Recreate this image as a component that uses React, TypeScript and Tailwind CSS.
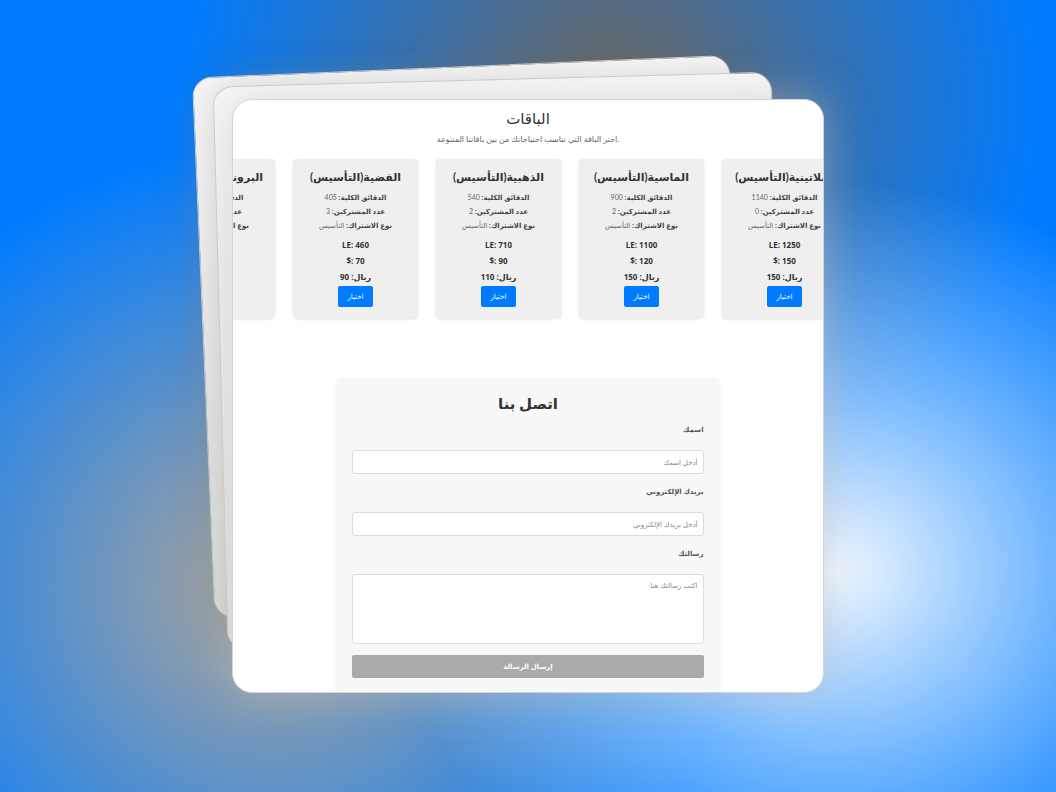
const plans = [
  { name: "البرونزية", minutes: 270, members: 3, le: 320, usd: 50, sar: 60 },
  { name: "الفضية", minutes: 405, members: 3, le: 460, usd: 70, sar: 90 },
  { name: "الذهبية", minutes: 540, members: 2, le: 710, usd: 90, sar: 110 },
  { name: "الماسية", minutes: 900, members: 2, le: 1100, usd: 120, sar: 150 },
  { name: "البلاتينية", minutes: 1140, members: 0, le: 1250, usd: 150, sar: 150 },
];

function PlanCard({ plan }: { plan: (typeof plans)[number] }) {
  return (
    <article
      dir="rtl"
      className="flex h-[159px] w-[125px] shrink-0 flex-col items-center rounded bg-[#efefef] pt-2 text-center whitespace-nowrap shadow-[0_1px_3px_rgba(0,0,0,0.12)]"
    >
      <h3 className="text-[11px] leading-[20px] font-bold text-[#333]">{plan.name}(التأسيس)</h3>
      <div className="mt-[3px] text-[7px] leading-[14px] text-[#666]">
        <p><strong className="text-[#444]">الدقائق الكلية:</strong> {plan.minutes}</p>
        <p><strong className="text-[#444]">عدد المشتركين:</strong> {plan.members}</p>
        <p><strong className="text-[#444]">نوع الاشتراك:</strong> التأسيس</p>
      </div>
      <div className="mt-[5px] font-['Noto_Sans','Lato','DejaVu_Sans',sans-serif] text-[8px] leading-[16px] font-bold text-[#333]">
        <p dir="ltr">LE: {plan.le}</p>
        <p dir="ltr">$: {plan.usd}</p>
        <p>ريال: {plan.sar}</p>
      </div>
      <button type="button" className="mt-px h-[21px] w-[35px] rounded-xs bg-[#007bff] text-[7px] text-white">
        اختيار
      </button>
    </article>
  );
}

const label = "block text-[7px] leading-[10px] font-bold text-[#555]";
const field =
  "mt-4 block w-full rounded-[3px] border border-[#ddd] bg-white px-[5px] text-[7px] text-[#555] outline-none placeholder:text-[#888]";

export default function App() {
  return (
    <div className="grid min-h-screen place-items-center overflow-hidden bg-[#007bff] bg-[radial-gradient(ellipse_440px_390px_at_79%_72%,rgba(240,247,255,1),rgba(225,240,255,0.5)_50%,transparent),radial-gradient(ellipse_460px_440px_at_26%_74%,rgba(176,166,152,1),rgba(176,166,152,0.5)_50%,transparent),radial-gradient(ellipse_430px_420px_at_58%_12%,rgba(108,102,95,1),rgba(108,102,95,0.5)_50%,transparent)] font-['Lato','DejaVu_Sans',sans-serif]">
      <div className="relative h-[75vh] w-[56vw]">
        <div className="absolute -top-[33px] -left-[29px] h-[91%] w-[91%] rotate-[-2.4deg] rounded-[20px] border border-[#ccc] bg-linear-to-b from-[#f5f5f5] to-[#dadada] shadow-[0_10px_40px_rgba(120,115,110,0.3)]" />
        <div className="absolute -top-5 -left-3 h-[95%] w-[94.6%] rotate-[-1.5deg] rounded-[20px] border border-[#ccc] bg-linear-to-b from-[#f7f8f8] to-[#e0e0e0] shadow-[0_0_24px_rgba(100,100,100,0.14)]" />
        <main className="relative h-full overflow-hidden rounded-[20px] border border-[#d4d4d4] bg-white shadow-[0_0_44px_rgba(195,193,190,0.55)]">
          <section className="text-center">
            <h1 className="mt-[7px] text-[15px] leading-[22px] text-[#333]">الباقات</h1>
            <p className="mt-1 text-[8px] leading-[12px] text-[#666]">اختر الباقة التي تناسب احتياجاتك من بين باقاتنا المتنوعة.</p>
            <div className="mt-[14px] flex justify-center gap-[18px] pr-[59px]">
              {plans.map((plan) => (
                <PlanCard key={plan.name} plan={plan} />
              ))}
            </div>
          </section>
          <form dir="rtl" className="mx-auto mt-[60px] w-[65%] rounded-md bg-[#f8f8f8] px-4 pt-[14px] pb-5 shadow-[0_0_3px_rgba(0,0,0,0.06)]">
            <h2 className="text-center text-[15px] leading-[22px] font-bold text-[#333]">اتصل بنا</h2>
            <label htmlFor="name" className={label + " mt-[10px]"}>اسمك</label>
            <input id="name" type="text" placeholder="أدخل اسمك" className={field + " h-6"} />
            <label htmlFor="email" className={label + " mt-3"}>بريدك الإلكتروني</label>
            <input id="email" type="email" placeholder="أدخل بريدك الإلكتروني" className={field + " h-6"} />
            <label htmlFor="message" className={label + " mt-3"}>رسالتك</label>
            <textarea id="message" placeholder="اكتب رسالتك هنا" className={field + " h-[70px] resize-none py-[5px]"} />
            <button type="submit" className="mt-[11px] block h-[23px] w-full rounded-xs bg-[#aaa] text-[7px] font-bold text-white">
              إرسال الرسالة
            </button>
            <div className="mt-[14px] h-6 w-full rounded-xs border border-[#ddd] bg-[#f2f2f2]" />
          </form>
        </main>
      </div>
    </div>
  );
}
